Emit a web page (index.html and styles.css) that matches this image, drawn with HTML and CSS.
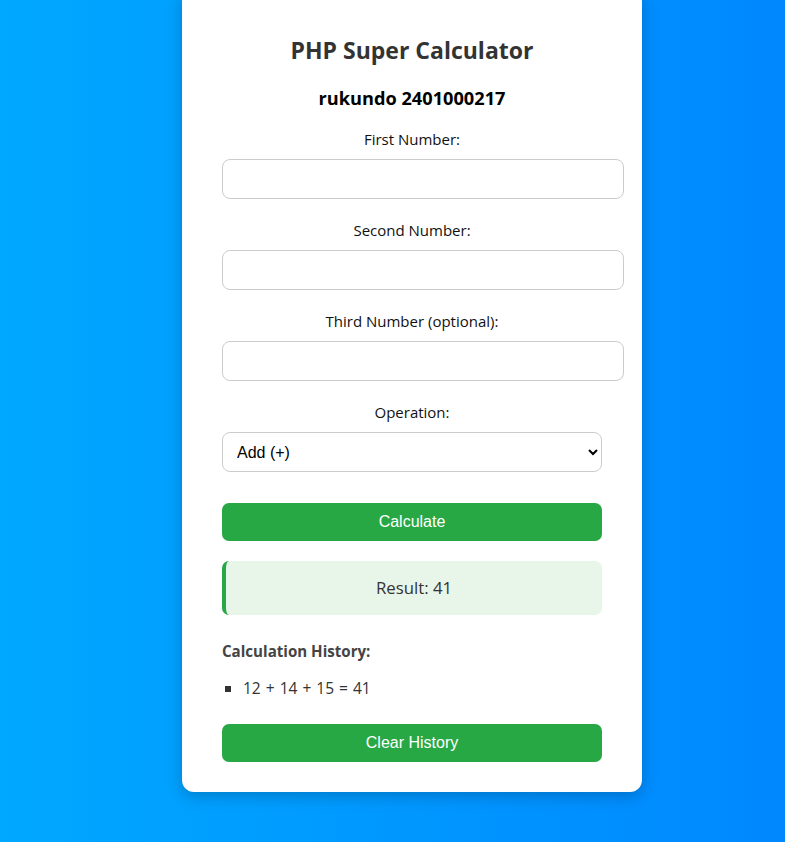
FILE: index.html
```html
<!DOCTYPE html>
<html lang="en">
<head>
<meta charset="utf-8">
<title>PHP Super Calculator</title>
<link rel="stylesheet" href="styles.css">
</head>
<body>
  <div class="card">
    <h2 class="title">PHP Super Calculator</h2>
    <h3 class="author">rukundo 2401000217</h3>
    <form class="calc-form">
      <label class="field-label" for="n1">First Number:</label>
      <input class="num-input" type="text" id="n1">
      <label class="field-label" for="n2">Second Number:</label>
      <input class="num-input" type="text" id="n2">
      <label class="field-label" for="n3">Third Number (optional):</label>
      <input class="num-input" type="text" id="n3">
      <label class="field-label" for="op">Operation:</label>
      <select class="op-select" id="op">
        <option>Add (+)</option>
        <option>Subtract (-)</option>
        <option>Multiply (×)</option>
        <option>Divide (÷)</option>
      </select>
      <button class="btn btn-calc" type="button">Calculate</button>
    </form>
    <div class="result">Result: 41</div>
    <div class="history">
      <h4 class="history-title">Calculation History:</h4>
      <ul class="history-list">
        <li>12 + 14 + 15 = 41</li>
      </ul>
      <button class="btn" type="button">Clear History</button>
    </div>
  </div>
</body>
</html>
```

FILE: styles.css
```css
html, body {
  margin: 0;
  padding: 0;
}
body {
  background: linear-gradient(to right, #00a8ff, #0088ff);
  min-height: 842px;
  display: flex;
  justify-content: center;
  align-items: flex-start;
  padding-left: 39px;
  font-family: "Open Sans", "Noto Sans", sans-serif;
  overflow: hidden;
}
.card {
  width: 380px;
  margin-top: -10px;
  padding: 44px 40px 30px;
  background: #fff;
  border-radius: 12px;
  box-shadow: 0 4px 16px rgba(0, 0, 0, 0.22);
  text-align: center;
}
.title {
  margin: 0 0 20px;
  font-size: 23px;
  line-height: 32px;
  font-weight: 700;
  color: #333;
}
.author {
  margin: 0 0 18px;
  font-size: 18.2px;
  line-height: 25px;
  font-weight: 700;
  color: #000;
}
.calc-form {
  margin: 0;
}
.field-label {
  display: block;
  font-size: 15px;
  line-height: 21px;
  margin-bottom: 9px;
  color: #111;
}
.num-input {
  display: block;
  width: 100%;
  height: 18px;
  padding: 10px;
  margin: 0 0 21px;
  border: 1px solid #ccc;
  border-radius: 8px;
  font-size: 16px;
  font-family: "Liberation Sans", Arial, sans-serif;
  background: #fff;
}
.op-select {
  display: block;
  width: 380px;
  height: 40px;
  padding: 0 8px 0 10px;
  margin: 0 0 31px;
  border: 1px solid #ccc;
  border-radius: 8px;
  font-size: 16px;
  font-family: "Liberation Sans", Arial, sans-serif;
  color: #000;
  background: #fff;
}
.btn {
  display: block;
  width: 100%;
  height: 38px;
  padding: 0;
  border: none;
  border-radius: 7px;
  background: #28a745;
  color: #fff;
  font-size: 16px;
  font-family: "Liberation Sans", Arial, sans-serif;
}
.btn-calc {
  margin-bottom: 20px;
}
.result {
  height: 54px;
  box-sizing: border-box;
  line-height: 54px;
  background: #e8f5e9;
  border-left: 4px solid #28a745;
  border-radius: 7px;
  font-size: 16.8px;
  color: #333;
  margin-bottom: 26px;
}
.history {
  text-align: left;
}
.history-title {
  margin: 0 0 16px;
  font-size: 15.1px;
  line-height: 21px;
  font-weight: 700;
  color: #444;
}
.history-list {
  margin: 0 0 25px;
  padding-left: 21px;
  list-style: square;
  color: #333;
}
.history-list li {
  font-size: 15.5px;
  line-height: 21px;
  word-spacing: 1px;
}
```
